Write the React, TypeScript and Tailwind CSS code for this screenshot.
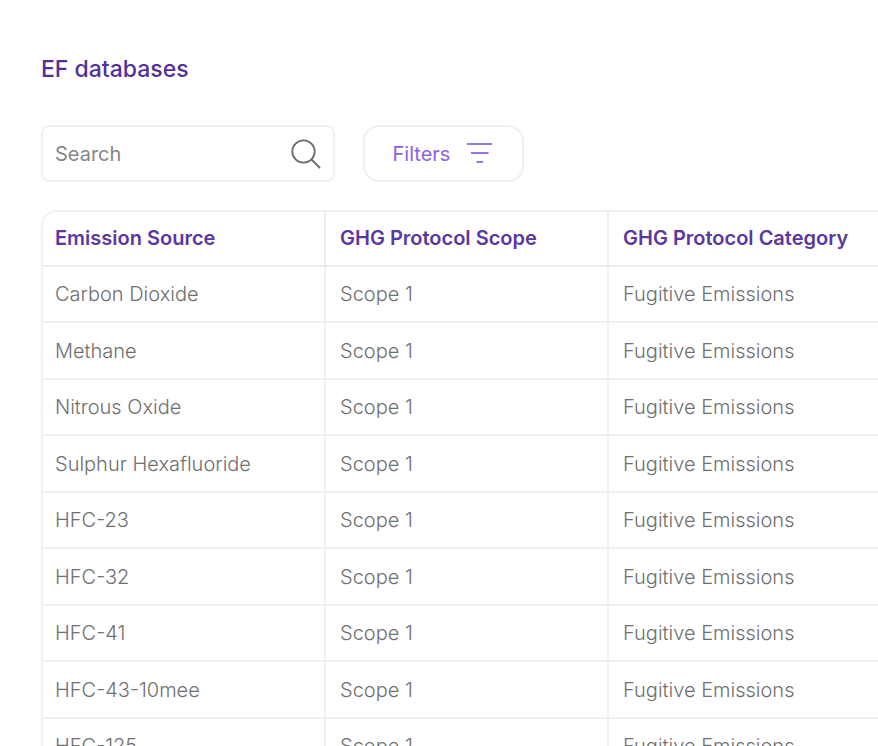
import { useState } from "react";

const columns = ["Emission Source", "GHG Protocol Scope", "GHG Protocol Category"];

const sources = [
  "Carbon Dioxide",
  "Methane",
  "Nitrous Oxide",
  "Sulphur Hexafluoride",
  "HFC-23",
  "HFC-32",
  "HFC-41",
  "HFC-43-10mee",
  "HFC-125",
];

const rows = sources.map((source) => ({
  source,
  scope: "Scope 1",
  category: "Fugitive Emissions",
}));

function SearchIcon() {
  return (
    <svg
      className="w-8 h-8 shrink-0"
      viewBox="0 0 32 32"
      fill="none"
      stroke="#6b6b6b"
      strokeWidth="1.8"
      aria-hidden="true"
    >
      <circle cx="14.5" cy="13.5" r="11.2" />
      <path d="M22.5 21.5l8.5 8.5" />
    </svg>
  );
}

function FilterIcon() {
  return (
    <svg
      className="w-7 h-6 shrink-0"
      viewBox="0 0 28 24"
      fill="none"
      stroke="#9673ea"
      strokeWidth="1.8"
      aria-hidden="true"
    >
      <path d="M1 2h25M5 11h17.5M10.5 20h6.5" />
    </svg>
  );
}

export default function App() {
  const [search, setSearch] = useState("");

  const visible = rows.filter((row) =>
    row.source.toLowerCase().includes(search.toLowerCase())
  );

  return (
    <div className="h-screen overflow-hidden bg-white pl-[41px] pt-[55px] font-['Inter',sans-serif] text-xl text-[#6f6f6f]">
      <h1 className="text-[23px] leading-7 font-medium text-[#52309a]">EF databases</h1>

      {/* TOOLBAR */}
      <div className="flex mt-[42px] gap-7">
        <label className="flex items-center w-[294px] h-[57px] rounded-lg border-2 border-[#f0f0f0] px-3">
          <input
            type="text"
            aria-label="Search"
            placeholder="Search"
            value={search}
            onChange={(e) => setSearch(e.target.value)}
            className="min-w-0 flex-1 outline-none placeholder:text-[#868686]"
          />
          <SearchIcon />
        </label>
        <button
          type="button"
          className="flex items-center justify-center gap-4 w-[161px] h-[57px] rounded-2xl border-2 border-[#f0f0f0] text-[#8b62e5]"
        >
          Filters
          <FilterIcon />
        </button>
      </div>

      {/* TABLE */}
      <div className="mt-7 rounded-tl-2xl border-l-2 border-t-2 border-[#f0f0f0]">
        <table className="w-full table-fixed border-separate border-spacing-0 text-left">
          <colgroup>
            <col className="w-[283px]" />
            <col className="w-[283px]" />
            <col />
          </colgroup>
          <thead>
            <tr className="h-[55px]">
              {columns.map((column) => (
                <th
                  key={column}
                  scope="col"
                  className="border-b-2 border-r-2 border-[#ececec] last:border-r-0 px-3 pb-0.5 not-first:pl-3.5 font-semibold whitespace-nowrap text-[#5a38a0]"
                >
                  {column}
                </th>
              ))}
            </tr>
          </thead>
          <tbody className="font-light">
            {visible.map((row) => (
              <tr key={row.source} className="h-[57px] odd:h-14">
                <td className="border-b-2 border-r-2 border-[#f0f0f0] px-3">{row.source}</td>
                <td className="border-b-2 border-r-2 border-[#f0f0f0] px-3.5">{row.scope}</td>
                <td className="border-b-2 border-[#f0f0f0] px-3.5">{row.category}</td>
              </tr>
            ))}
          </tbody>
        </table>
      </div>
    </div>
  );
}
